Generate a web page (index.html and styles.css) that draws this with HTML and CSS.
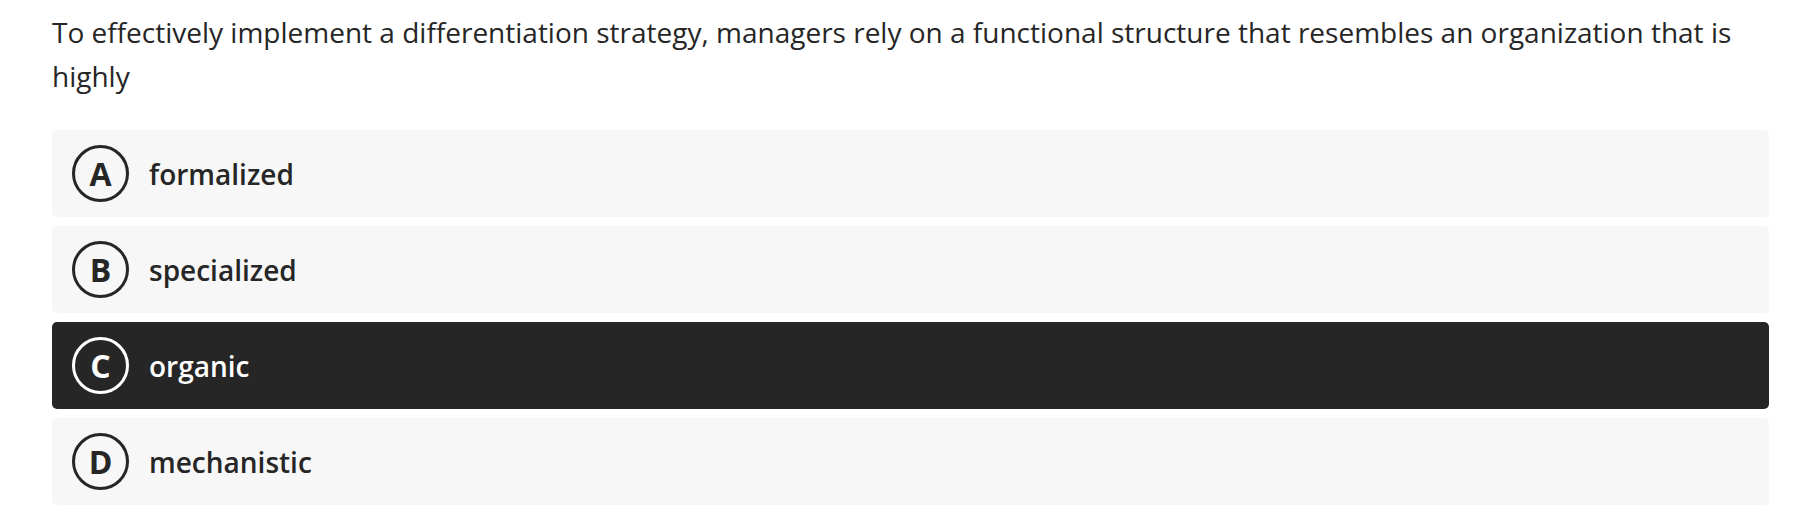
FILE: index.html
```html
<!DOCTYPE html>
<html lang="en">
<head>
  <meta charset="UTF-8" />
  <title>Question</title>
  <link rel="stylesheet" href="styles.css">
</head>
<body>
  <div id="quiz">
    <p class="question">To effectively implement a differentiation strategy, managers rely on a functional structure that resembles an organization that is highly</p>

    <div class="options">
      <div class="option">
        <span class="letter">A</span>
        <span class="answer">formalized</span>
      </div>
      <div class="option">
        <span class="letter">B</span>
        <span class="answer">specialized</span>
      </div>
      <div class="option selected">
        <span class="letter">C</span>
        <span class="answer">organic</span>
      </div>
      <div class="option">
        <span class="letter">D</span>
        <span class="answer">mechanistic</span>
      </div>
    </div>
  </div>
</body>
</html>
```

FILE: styles.css
```css
body {
  margin: 0;
  background: #fff;
  font-family: "Open Sans", "Liberation Sans", sans-serif;
  color: #262626;
}
#quiz {
  padding: 10px 35px 0 52px;
}
.question {
  margin: 0 0 32px 0;
  font-size: 28px;
  line-height: 44px;
}
.options {
  display: flex;
  flex-direction: column;
  gap: 9px;
}
.option {
  display: flex;
  align-items: center;
  gap: 20px;
  height: 87px;
  padding: 0 20px;
  background-color: #f7f7f7;
  border-radius: 5px;
  box-sizing: border-box;
}
.option.selected {
  background-color: #262626;
  color: #fff;
}
.letter {
  display: flex;
  align-items: center;
  justify-content: center;
  flex-shrink: 0;
  width: 57px;
  height: 57px;
  border: 3px solid currentColor;
  border-radius: 50%;
  box-sizing: border-box;
  font-size: 32px;
  font-weight: 700;
}
.answer {
  font-size: 28px;
  font-weight: 600;
}
```
